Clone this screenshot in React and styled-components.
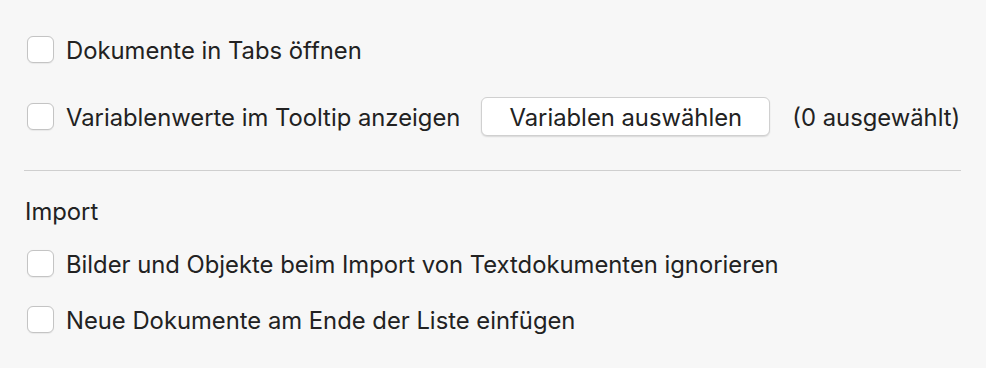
import React from 'react';
import styled, { createGlobalStyle } from 'styled-components';

const GlobalStyle = createGlobalStyle`
  html, body {
    margin: 0;
    padding: 0;
    background: #f7f7f7;
  }
  body {
    font-family: Inter, "Noto Sans", sans-serif;
    color: #222222;
    -webkit-font-smoothing: antialiased;
  }
`;

const Panel = styled.div`
  width: 986px;
  height: 368px;
  box-sizing: border-box;
  padding: 35px 25px 0 27px;
  background: #f7f7f7;
`;

const Row = styled.div`
  display: flex;
  align-items: center;
  height: 28px;
  margin-bottom: ${(p) => p.gap || 0}px;
`;

const Checkbox = styled.span`
  flex: none;
  width: 27px;
  height: 27px;
  box-sizing: border-box;
  border: 1px solid #c4c4c4;
  border-radius: 6px;
  background: #ffffff;
  box-shadow: 0 0.5px 1px rgba(0, 0, 0, 0.06);
`;

const Label = styled.span`
  margin-left: 12px;
  padding-top: 2px;
  font-size: 23.8px;
  white-space: nowrap;
`;

const Button = styled.button`
  flex: none;
  margin-left: 21px;
  width: 289px;
  height: 39px;
  box-sizing: border-box;
  border: 1px solid #d0d0d0;
  border-radius: 6px;
  background: #ffffff;
  box-shadow: 0 1px 1.5px rgba(0, 0, 0, 0.12);
  font-family: inherit;
  font-size: 23.8px;
  color: #222222;
  padding: 2px 0 0;
`;

const Count = styled.span`
  margin-left: 22px;
  padding-top: 2px;
  font-size: 23.8px;
  white-space: nowrap;
`;

const Divider = styled.hr`
  margin: 40px 0 0 -3px;
  border: none;
  border-top: 1px solid #cfcfcf;
  height: 0;
`;

const SectionTitle = styled.div`
  margin: 27px 0 23px -2px;
  font-size: 23.8px;
  height: 28px;
  line-height: 28px;
`;

export default function App() {
  return (
    <>
      <GlobalStyle />
      <Panel>
        <Row gap={39}>
          <Checkbox />
          <Label>Dokumente in Tabs öffnen</Label>
        </Row>
        <Row>
          <Checkbox />
          <Label>Variablenwerte im Tooltip anzeigen</Label>
          <Button>Variablen auswählen</Button>
          <Count>(0 ausgewählt)</Count>
        </Row>
        <Divider />
        <SectionTitle>Import</SectionTitle>
        <Row gap={28}>
          <Checkbox />
          <Label>Bilder und Objekte beim Import von Textdokumenten ignorieren</Label>
        </Row>
        <Row>
          <Checkbox />
          <Label>Neue Dokumente am Ende der Liste einfügen</Label>
        </Row>
      </Panel>
    </>
  );
}
